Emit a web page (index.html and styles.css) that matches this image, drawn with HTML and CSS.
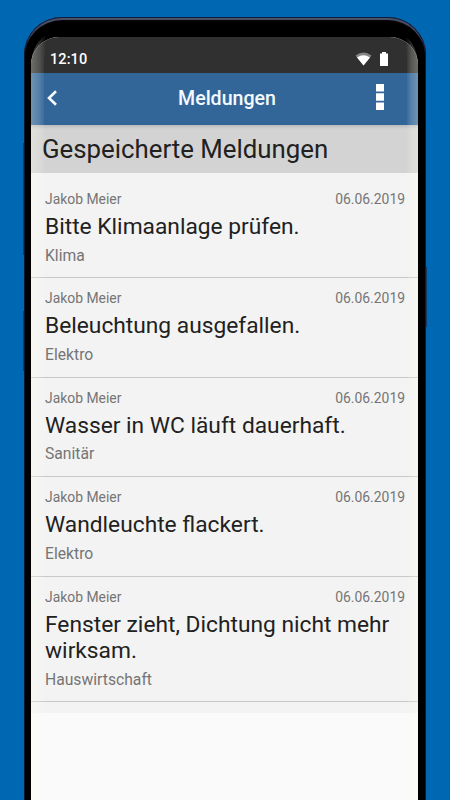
FILE: index.html
```
<!DOCTYPE html>
<html lang="de">
<head>
    <meta charset="utf-8">
    <title>Meldungen</title>
    <link rel="stylesheet" href="styles.css">
</head>
<body>
    <div class="phone">
        <span class="side-key volume"></span>
        <span class="side-key assistant"></span>
        <span class="side-key power"></span>
        <div class="screen">
            <div class="status-bar">
                <span class="time">12:10</span>
                <svg class="wifi" width="17" height="14" viewBox="0 0 17 14">
                    <path d="M0.5 3.5Q8.5 -2.5 16.5 3.5L8.5 13.5Z" fill="#858585"/>
                    <path d="M2 5.6Q8.5 1 15 5.6L8.5 13.5Z" fill="#fff"/>
                </svg>
                <svg class="battery" width="8" height="14" viewBox="0 0 8 14">
                    <path d="M0 1.5H2V0H6V1.5H8V14H0Z" fill="#fff"/>
                </svg>
            </div>
            <header class="app-bar">
                <svg class="back" width="12" height="18" viewBox="0 0 12 18">
                    <path d="M10 2.2L3 9L10 15.8" fill="none" stroke="#f4faff" stroke-width="2.6"/>
                </svg>
                <h1>Meldungen</h1>
                <svg class="menu" width="8" height="26" viewBox="0 0 8 26">
                    <path d="M0 0H8V7.5H0ZM0 9.2H8V16.7H0ZM0 18.4H8V25.9H0Z" fill="#fff"/>
                </svg>
            </header>
            <h2>Gespeicherte Meldungen</h2>
            <div class="list">
                <div class="item">
                    <div class="meta"><span>Jakob Meier</span><span class="date">06.06.2019</span></div>
                    <div class="title">Bitte Klimaanlage prüfen.</div>
                    <div class="category">Klima</div>
                </div>
                <div class="item">
                    <div class="meta"><span>Jakob Meier</span><span class="date">06.06.2019</span></div>
                    <div class="title">Beleuchtung ausgefallen.</div>
                    <div class="category">Elektro</div>
                </div>
                <div class="item">
                    <div class="meta"><span>Jakob Meier</span><span class="date">06.06.2019</span></div>
                    <div class="title">Wasser in WC läuft dauerhaft.</div>
                    <div class="category">Sanitär</div>
                </div>
                <div class="item">
                    <div class="meta"><span>Jakob Meier</span><span class="date">06.06.2019</span></div>
                    <div class="title">Wandleuchte flackert.</div>
                    <div class="category">Elektro</div>
                </div>
                <div class="item">
                    <div class="meta"><span>Jakob Meier</span><span class="date">06.06.2019</span></div>
                    <div class="title">Fenster zieht, Dichtung nicht mehr wirksam.</div>
                    <div class="category">Hauswirtschaft</div>
                </div>
            </div>
        </div>
        <!-- reflections on the curved glass -->
        <svg class="glare" width="402" height="783" viewBox="0 0 402 783">
            <defs>
                <linearGradient id="glareLeft" x1="0" x2="1" y1="0" y2="0">
                    <stop offset="0" stop-color="#fffff0" stop-opacity="0.3"/>
                    <stop offset="0.45" stop-color="#fffff0" stop-opacity="0.15"/>
                    <stop offset="0.75" stop-color="#fffff0" stop-opacity="0"/>
                </linearGradient>
                <linearGradient id="glareRight" x1="1" x2="0" y1="0" y2="0">
                    <stop offset="0" stop-color="#fffff0" stop-opacity="0.3"/>
                    <stop offset="0.35" stop-color="#fffff0" stop-opacity="0.18"/>
                    <stop offset="0.65" stop-color="#fffff0" stop-opacity="0"/>
                </linearGradient>
            </defs>
            <path d="M27 15Q7 25 7 50V783H20V48Q20 30 27 15Z" fill="url(#glareLeft)"/>
            <path d="M375 15Q394 25 394 50V783H383V48Q384 30 375 15Z" fill="url(#glareRight)"/>
        </svg>
    </div>
</body>
</html>
```

FILE: styles.css
```
* {
    box-sizing: border-box;
}
body {
    font-family: Roboto, sans-serif;
    margin: 0;
    height: 800px;
    padding: 17px 24px 0;
    background-color: #0067b3;
    overflow: hidden;
}
.phone {
    position: relative;
    height: 820px;
    padding: 20px 8px 0 7px;
    background-color: #000;
    border-radius: 38px 38px 0 0;
    box-shadow: inset 0 0 0 1px #0b1b3c, inset 0 3px 1px 0 #50556e;
}
.side-key {
    position: absolute;
    width: 1px;
    background-color: #163966;
}
.volume {
    left: -1px;
    top: 126px;
    height: 112px;
}
.assistant {
    left: -1px;
    top: 294px;
    height: 60px;
}
.power {
    right: -1px;
    top: 250px;
    height: 60px;
}
.screen {
    height: 800px;
    background-color: #fafafa;
    border-radius: 28px 28px 0 0;
    overflow: hidden;
}
.status-bar {
    display: flex;
    align-items: center;
    height: 36px;
    padding: 8px 30px 0 19px;
    background-color: #303030;
    color: #fff;
}
.time {
    font-size: 14.5px;
    font-weight: 500;
    letter-spacing: 0.1px;
    margin: 1px auto 0 0;
}
.battery {
    margin-left: 8px;
}
.app-bar {
    display: flex;
    align-items: center;
    justify-content: space-between;
    height: 52px;
    padding: 0 34px 2px 15px;
    background-color: #326699;
    color: #f4faff;
}
h1 {
    font-size: 19.6px;
    font-weight: 500;
    margin: 0 0 0 20px;
}
.menu {
    margin-top: -2px;
}
h2 {
    height: 48px;
    margin: 0;
    padding-left: 11px;
    background: linear-gradient(#bbb, #d3d3d3 4px);
    color: #212121;
    font-size: 25.8px;
    font-weight: 400;
    line-height: 48px;
}
.list {
    padding: 6px 0 11px;
    background-color: #f3f3f3;
    color: #757575;
}
.item {
    padding: 11px 13px 11.9px 14px;
    border-bottom: 1px solid #c8c8c8;
}
.meta {
    display: flex;
    justify-content: space-between;
    font-size: 13.9px;
    line-height: 18px;
}
.title {
    margin: 6px 0 5px;
    color: #212121;
    font-size: 22.75px;
    line-height: 26.5px;
}
.category {
    font-size: 15.7px;
    line-height: 20px;
}
.glare {
    position: absolute;
    left: 0;
    top: 0;
}
```
